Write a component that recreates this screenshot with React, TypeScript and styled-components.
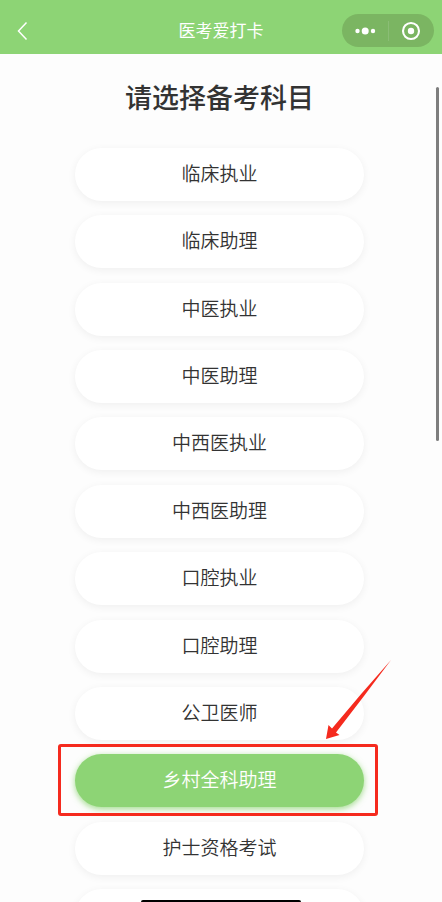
import React from 'react';
import styled, { createGlobalStyle } from 'styled-components';

const GlobalStyle = createGlobalStyle`
  * { box-sizing: border-box; }
  body {
    margin: 0;
    background: #fdfdfd;
    color: #333;
    font-family: "Noto Sans CJK SC", sans-serif;
  }
  button { font: inherit; color: inherit; border: 0; padding: 0; background: none; cursor: pointer; }
`;

const Page = styled.div`
  position: relative;
  height: 100vh;
  overflow: hidden;
`;

const NavBar = styled.header`
  display: grid;
  grid-template-columns: 1fr auto 1fr;
  align-items: center;
  height: 54px;
  padding: 7px 8px 0;
  background: #8dd475;
  color: #fff;
`;

const NavTitle = styled.span`
  padding-bottom: 1px;
  font-size: 17px;
  line-height: 24px;
  font-weight: 400;
`;

const BackButton = styled.button`
  display: flex;
  width: 26px;
  height: 24px;
`;

const Capsule = styled.div`
  display: flex;
  justify-self: end;
  align-items: center;
  width: 92px;
  height: 33px;
  border-radius: 17px;
  background: #7bb562;
`;

const CapsuleButton = styled.button`
  display: flex;
  flex: 1;
  align-items: center;
  justify-content: center;
  height: 20px;

  & + & { border-left: 1px solid #8abd75; }
`;

const Main = styled.main`
  padding: 23px 78px 0 75px;
`;

const Heading = styled.h1`
  margin: 0 0 31px;
  font-size: 27px;
  line-height: 40px;
  font-weight: 500;
  text-align: center;
  white-space: nowrap;
`;

const SubjectList = styled.ul`
  display: flex;
  flex-direction: column;
  justify-content: space-between;
  min-height: 794px;
  margin: 0;
  padding: 0;
  list-style: none;
`;

const SubjectItem = styled.li`
  position: relative;
`;

const SubjectButton = styled.button<{ $active: boolean }>`
  display: block;
  width: 100%;
  height: 53px;
  padding-bottom: 3px;
  border-radius: 27px;
  font-size: 19px;
  font-weight: 350;
  line-height: 50px;
  text-align: center;
  color: ${(p) => (p.$active ? '#fff' : '#333')};
  background: ${(p) => (p.$active ? '#8dd475' : '#fff')};
  box-shadow: ${(p) =>
    p.$active ? '0 2px 6px rgba(120, 205, 90, 0.7)' : '0 2px 8px rgba(0, 0, 0, 0.06)'};
`;

const Highlight = styled.div`
  position: absolute;
  inset: -10px -14px -9px -17px;
  border: 3px solid #f52a1e;
  border-radius: 3px;
  pointer-events: none;
`;

const Arrow = styled.svg`
  position: absolute;
  right: -28px;
  bottom: 67px;
  pointer-events: none;
`;

const ScrollThumb = styled.div`
  position: absolute;
  top: 87px;
  right: 3px;
  width: 3px;
  height: 354px;
  border-radius: 2px;
  background: #7e7e7e;
`;

const HomeIndicator = styled.div`
  position: absolute;
  bottom: 0;
  left: 32%;
  right: 32%;
  height: 2px;
  border-radius: 2px 2px 0 0;
  background: #000;
`;

const subjects = [
  '临床执业', '临床助理', '中医执业', '中医助理', '中西医执业', '中西医助理',
  '口腔执业', '口腔助理', '公卫医师', '乡村全科助理', '护士资格考试', '',
];
const selected = '乡村全科助理';

export default function App() {
  return (
    <Page>
      <GlobalStyle />
      <NavBar>
        <BackButton type="button">
          <svg width="26" height="24" viewBox="0 0 26 24" fill="none" stroke="#fff" strokeWidth="1.5">
            <path d="M18.5 3.5 10.5 12l8 8.5" />
          </svg>
        </BackButton>
        <NavTitle>医考爱打卡</NavTitle>
        <Capsule>
          <CapsuleButton type="button">
            <svg width="22" height="10" viewBox="0 0 22 10" fill="#fff">
              <circle cx="3.5" cy="5" r="2.2" />
              <circle cx="11.2" cy="5" r="3.5" />
              <circle cx="19" cy="5" r="2.2" />
            </svg>
          </CapsuleButton>
          <CapsuleButton type="button">
            <svg width="20" height="20" viewBox="0 0 20 20" fill="none">
              <circle cx="10" cy="10" r="8" stroke="#fff" strokeWidth="2.1" />
              <circle cx="10" cy="10" r="3.2" fill="#fff" />
            </svg>
          </CapsuleButton>
        </Capsule>
      </NavBar>
      <Main>
        <Heading>请选择备考科目</Heading>
        <SubjectList>
          {subjects.map((name) => (
            <SubjectItem key={name}>
              <SubjectButton type="button" $active={name === selected}>{name}</SubjectButton>
              {name === selected && (
                <>
                  <Highlight />
                  <Arrow width="67" height="81" viewBox="0 0 67 81" fill="#f52a1e">
                    <path d="M66 1 37 34 7 69.5 3.5 66 1 80 14.5 76 11 73.5 39 37Z" />
                  </Arrow>
                </>
              )}
            </SubjectItem>
          ))}
        </SubjectList>
      </Main>
      <ScrollThumb />
      <HomeIndicator />
    </Page>
  );
}
